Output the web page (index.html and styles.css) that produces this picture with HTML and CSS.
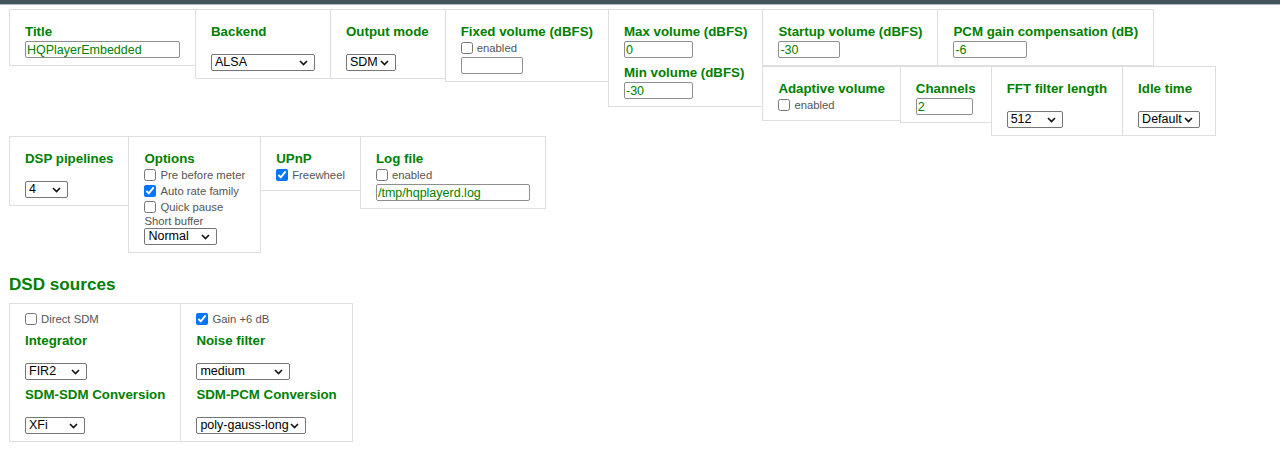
FILE: index.html
```html
<!DOCTYPE html>
<html lang="en">
<head>
<meta charset="utf-8">
<title>HQPlayer Embedded settings</title>
<link rel="stylesheet" href="styles.css">
</head>
<body>
<div class="topbar"></div>
<main class="page">
  <div class="top">
    <div class="box">
      <div class="lbl">Title</div>
      <input class="inp w155" type="text" value="HQPlayerEmbedded">
    </div>
    <div class="box">
      <div class="lbl">Backend</div>
      <select class="sel w104"><option>ALSA</option></select>
    </div>
    <div class="box box-out">
      <div class="lbl">Output mode</div>
      <select class="sel w50"><option>SDM</option></select>
    </div>
    <div class="box">
      <div class="lbl">Fixed volume (dBFS)</div>
      <label class="cb"><input type="checkbox">enabled</label>
      <input class="inp w62" type="text" value="">
    </div>
    <div class="box">
      <div class="lbl">Max volume (dBFS)</div>
      <input class="inp w69" type="text" value="0">
      <div class="lbl">Min volume (dBFS)</div>
      <input class="inp w69" type="text" value="-30">
    </div>
    <div class="stack">
      <div class="row">
        <div class="box">
          <div class="lbl">Startup volume (dBFS)</div>
          <input class="inp w62" type="text" value="-30">
        </div>
        <div class="box">
          <div class="lbl">PCM gain compensation (dB)</div>
          <input class="inp w74" type="text" value="-6">
        </div>
      </div>
      <div class="row">
        <div class="box">
          <div class="lbl">Adaptive volume</div>
          <label class="cb"><input type="checkbox">enabled</label>
        </div>
        <div class="box">
          <div class="lbl">Channels</div>
          <input class="inp w57" type="text" value="2">
        </div>
        <div class="box">
          <div class="lbl">FFT filter length</div>
          <select class="sel w56"><option>512</option></select>
        </div>
        <div class="box">
          <div class="lbl">Idle time</div>
          <select class="sel w62"><option>Default</option></select>
        </div>
      </div>
    </div>
  </div>

  <div class="mid">
    <div class="box">
      <div class="lbl">DSP pipelines</div>
      <select class="sel w43"><option>4</option></select>
    </div>
    <div class="box">
      <div class="lbl">Options</div>
      <label class="cb"><input type="checkbox">Pre before meter</label>
      <label class="cb"><input type="checkbox" checked>Auto rate family</label>
      <label class="cb"><input type="checkbox">Quick pause</label>
      <div class="note">Short buffer</div>
      <select class="sel sel-tight w73"><option>Normal</option></select>
    </div>
    <div class="box">
      <div class="lbl">UPnP</div>
      <label class="cb"><input type="checkbox" checked>Freewheel</label>
    </div>
    <div class="box">
      <div class="lbl">Log file</div>
      <label class="cb"><input type="checkbox">enabled</label>
      <input class="inp w154" type="text" value="/tmp/hqplayerd.log">
    </div>
  </div>

  <h2 class="sec">DSD sources</h2>
  <div class="dsd">
    <div class="dsd-col">
      <label class="cb"><input type="checkbox">Direct SDM</label>
      <div class="lbl">Integrator</div>
      <select class="sel w62"><option>FIR2</option></select>
      <div class="lbl">SDM-SDM Conversion</div>
      <select class="sel w60"><option>XFi</option></select>
    </div>
    <div class="dsd-col">
      <label class="cb"><input type="checkbox" checked>Gain +6 dB</label>
      <div class="lbl">Noise filter</div>
      <select class="sel w94"><option>medium</option></select>
      <div class="lbl">SDM-PCM Conversion</div>
      <select class="sel w110"><option>poly-gauss-long</option></select>
    </div>
  </div>
</main>
</body>
</html>
```

FILE: styles.css
```css
* { box-sizing: border-box; }

html, body {
  margin: 0;
  padding: 0;
  background: #fff;
}

body {
  font-family: "Liberation Sans", Arial, sans-serif;
  font-size: 11.3px;
  color: #555;
}

.topbar {
  height: 5px;
  background: #44545e;
  border-bottom: 1px solid #b3bbc0;
}

.page {
  padding: 4px 0 0 9px;
}

.top,
.row,
.mid {
  display: flex;
  align-items: flex-start;
}

.stack {
  display: flex;
  flex-direction: column;
}

.box {
  flex: none;
  border: 1px solid #dedede;
  padding: 7px 15px;
  margin-right: -1px;
}

.box-out { padding-right: 16px; }

.lbl {
  margin-top: 7px;
  font-size: 13.3px;
  font-weight: bold;
  line-height: 16px;
  color: #008000;
  white-space: nowrap;
}

.inp {
  display: block;
  margin: 1px 0 0;
  height: 17px;
  padding: 0 1px;
  border: 1px solid #8f8f8f;
  border-radius: 2px;
  background: #fff;
  font: 12.5px "Liberation Sans", Arial, sans-serif;
  color: #008000;
  outline: none;
}

.sel {
  display: block;
  margin: 14px 0 0;
  height: 17px;
  padding: 0 0 0 3px;
  border: 1px solid #767676;
  border-radius: 2px;
  -webkit-appearance: none;
  appearance: none;
  background: #fff url("data:image/svg+xml,%3Csvg xmlns='http://www.w3.org/2000/svg' width='9' height='6' viewBox='0 0 9 6'%3E%3Cpath d='M1 1l3.5 3.5L8 1' fill='none' stroke='%23111' stroke-width='1.6'/%3E%3C/svg%3E") no-repeat right 6px center;
  font: 12.5px "Liberation Sans", Arial, sans-serif;
  line-height: 15px;
  color: #000;
}

.sel-tight { margin-top: 0; }

.cb {
  display: flex;
  align-items: center;
  height: 16px;
  white-space: nowrap;
  color: #555;
}

.cb input {
  width: 12px;
  height: 12px;
  margin: 0 4px 0 0;
  flex: none;
}

.note {
  line-height: 13px;
  white-space: nowrap;
}

.sec {
  margin: 22px 0 8px;
  font-size: 17.1px;
  font-weight: bold;
  line-height: 20px;
  color: #008000;
}

.dsd {
  display: inline-flex;
  align-items: stretch;
  border: 1px solid #dedede;
}

.dsd-col {
  padding: 7px 15px;
}

.dsd-col + .dsd-col {
  border-left: 1px solid #dedede;
}

.dsd .cb { height: 15px; }

.w43 { width: 43px; }
.w50 { width: 50px; }
.w56 { width: 56px; }
.w57 { width: 57px; }
.w60 { width: 60px; }
.w61 { width: 61px; }
.w62 { width: 62px; }
.w69 { width: 69px; }
.w73 { width: 73px; }
.w74 { width: 74px; }
.w94 { width: 94px; }
.w104 { width: 104px; }
.w110 { width: 110px; }
.w154 { width: 154px; }
.w155 { width: 155px; }
```
